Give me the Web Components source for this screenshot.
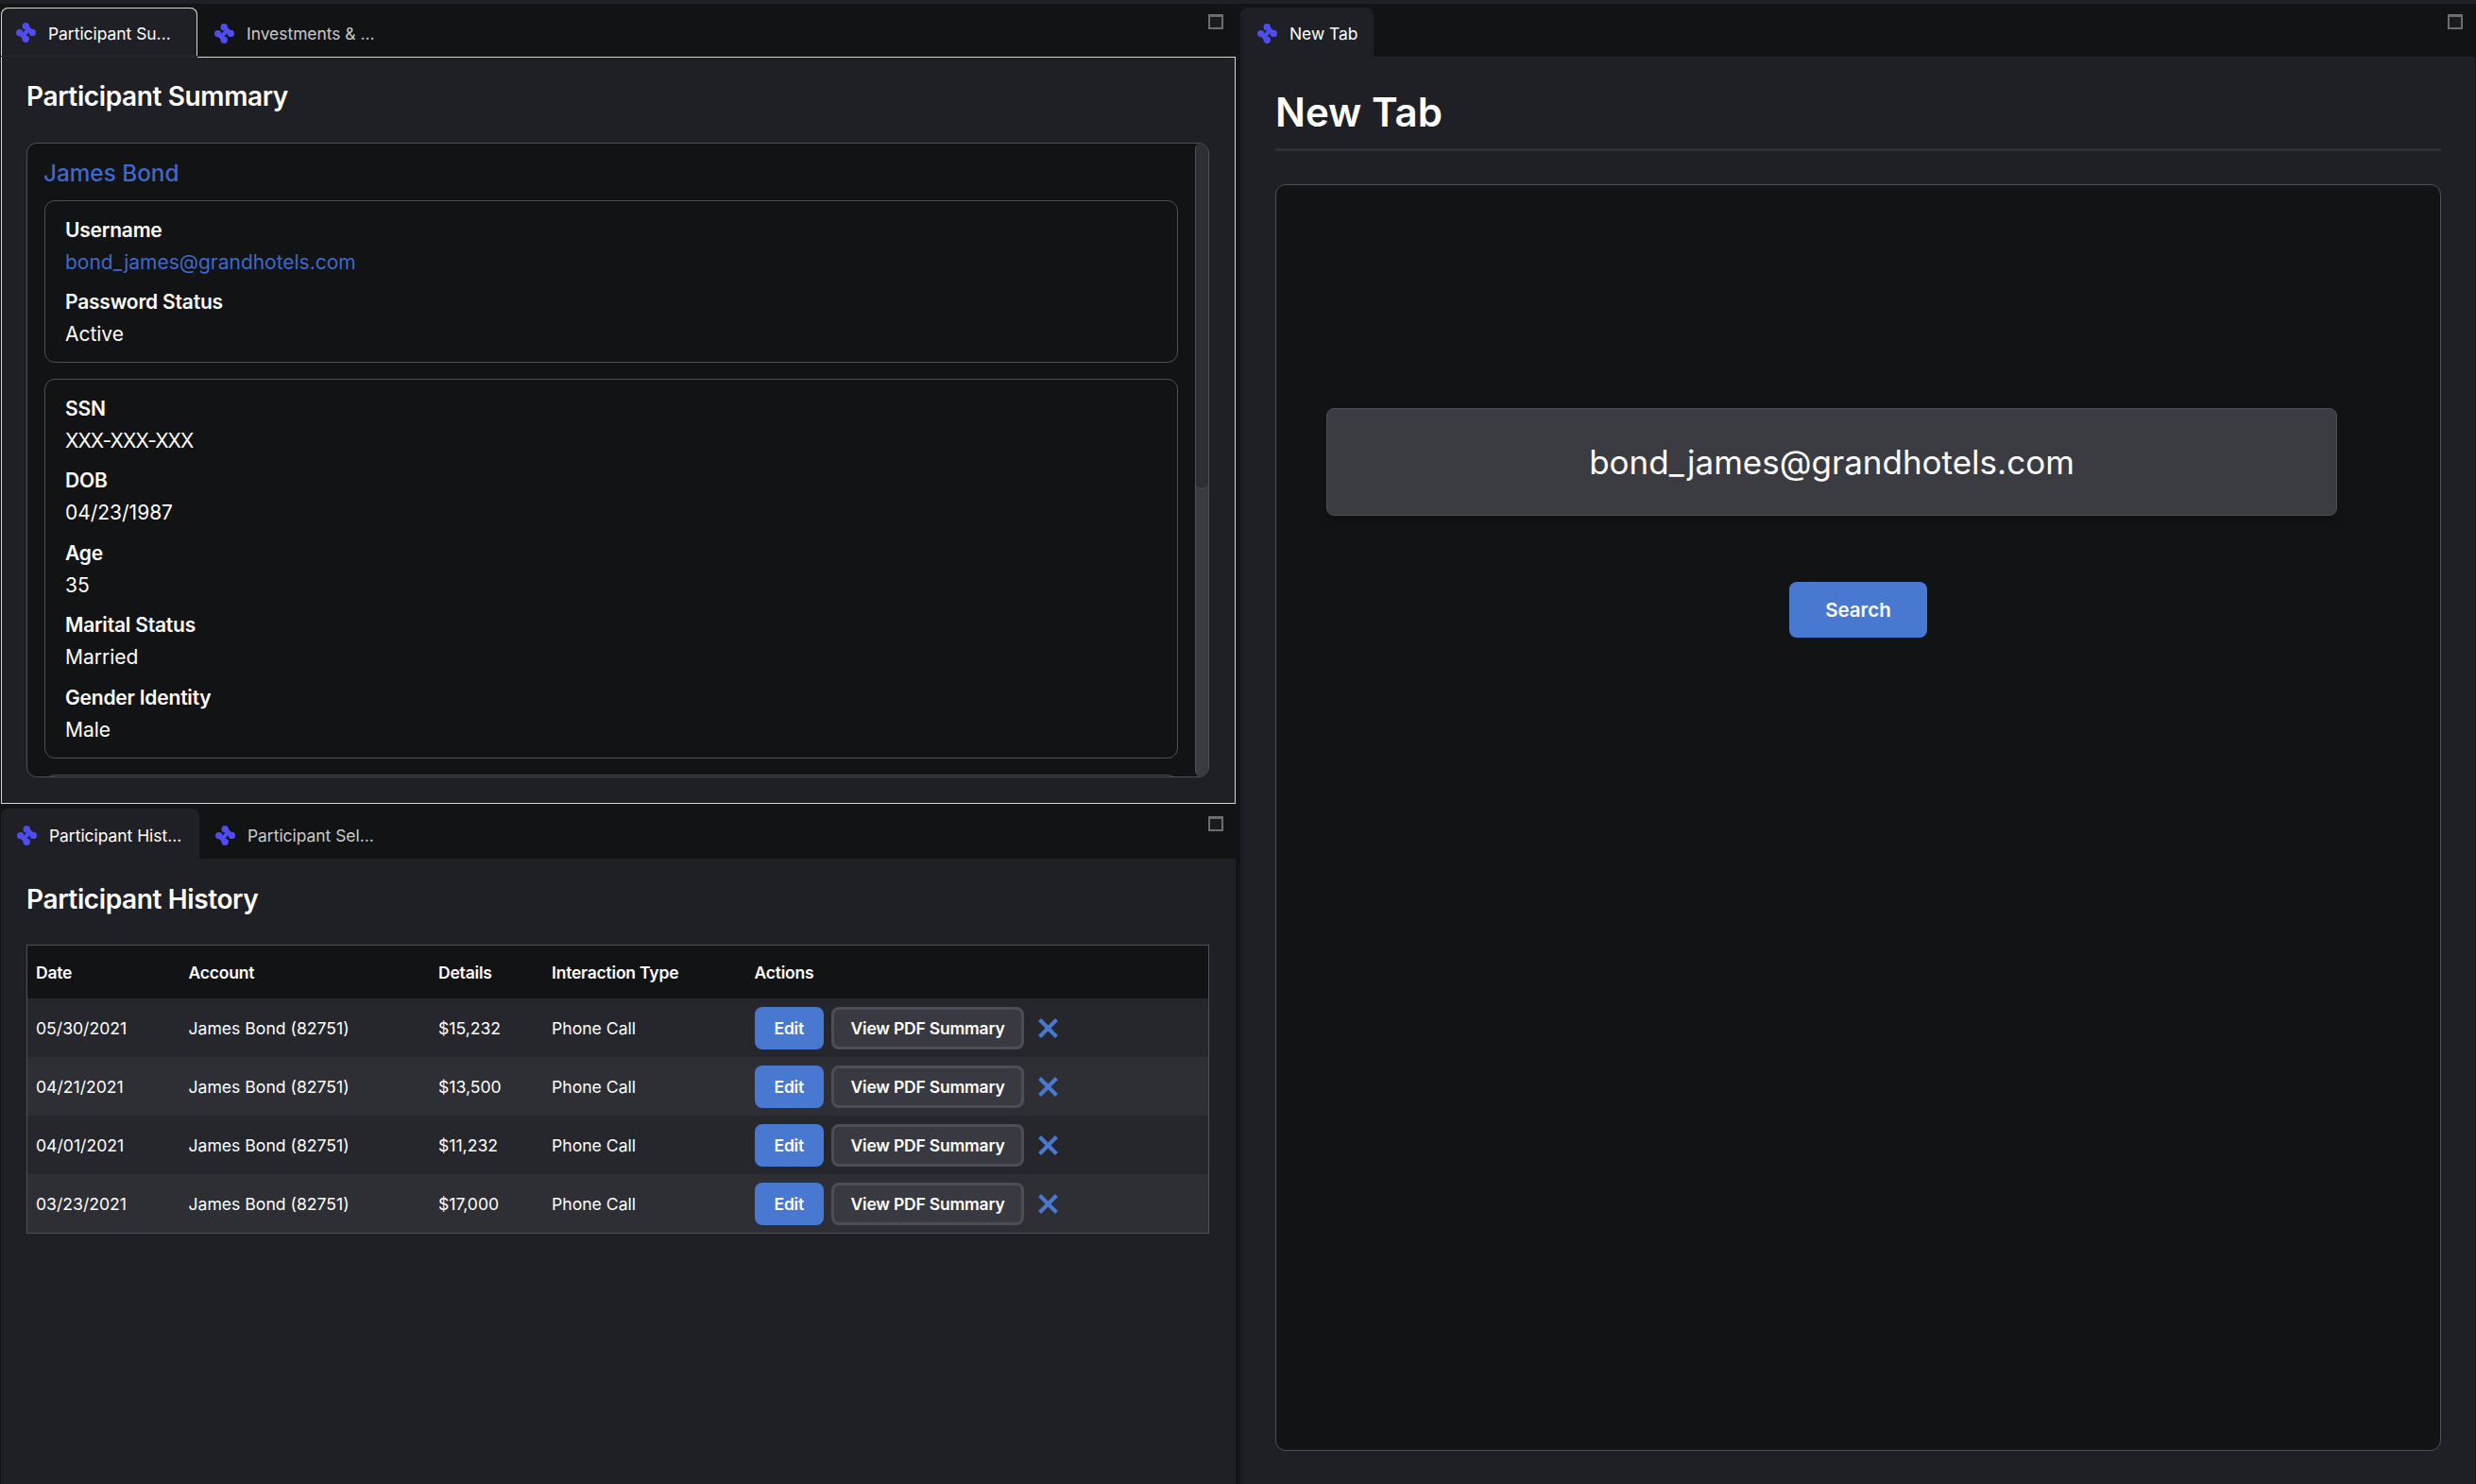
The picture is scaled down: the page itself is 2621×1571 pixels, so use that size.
<!DOCTYPE html>
<html><head><meta charset="utf-8"><style>
html,body{margin:0;padding:0;height:100%;background:#121315;overflow:hidden}
body{font-family:Inter,"Noto Sans",sans-serif;color:#fff}
</style></head><body>
<script>
const T=(html)=>{const t=document.createElement('template');t.innerHTML=html;return t};
function def(name,html){
  const tpl=T(html);
  customElements.define(name,class extends HTMLElement{
    constructor(){super();this.attachShadow({mode:'open'}).appendChild(tpl.content.cloneNode(true));}
  });
}
def('app-icon',`<style>:host{display:inline-flex;width:21px;height:21px;flex:none}svg{width:21px;height:21px}</style>
<svg viewBox="0 0 21 21" fill="#4f4df0"><circle cx="10.2" cy="3.7" r="3.7"/><circle cx="17.3" cy="10.4" r="3.7"/><circle cx="3.7" cy="10.6" r="3.7"/><circle cx="10.2" cy="17.3" r="3.7"/><path d="M10.2 3.7 17.3 10.4M3.7 10.6 10.2 17.3" stroke="#4f4df0" stroke-width="4.4"/><path d="M13.7 7 7 14" stroke="#4f4df0" stroke-width="4"/></svg>`);
def('app-shell',`<style>:host{display:flex;height:1571px;box-sizing:border-box;padding-top:4px;background:linear-gradient(#1f2025 4px,#121315 4px)}
.l{width:1307px;margin-left:1px;display:flex;flex-direction:column;flex:none}.r{flex:1;margin-left:5px;display:flex;padding-right:1px}</style>
<div class="l"><slot name="left"></slot></div><div class="r"><slot name="right"></slot></div>`);
def('dock-tab',`<style>:host{display:flex;align-items:center;box-sizing:border-box;height:var(--tabh,52px);margin-top:var(--tabm,4px);padding:var(--pt,3px) 0 0 18px;gap:13px;font-size:17.4px;color:#c9cacd;flex:none;white-space:nowrap}
:host([active]){background:#1f2025;border-radius:8px 8px 0 0;color:#fff;padding-left:16px}
:host([outlined]){box-shadow:inset 1px 0 #d4d4d6,inset -1px 0 #d4d4d6,inset 0 1px #d4d4d6;border-bottom:1px solid #2a2b30}
span{padding-top:var(--sp,0)}
</style><app-icon></app-icon><span><slot></slot></span>`);
def('dock-pane',`<style>:host{display:flex;flex-direction:column;position:relative;box-sizing:border-box;min-height:0}
.bar{height:56px;display:flex;flex:none;position:relative;box-sizing:border-box}
.max{position:absolute;width:16px;height:16px;box-sizing:border-box;border:2px solid #6d6d70;border-top-width:3px;background:#1a1b1e;top:11px;right:13px}
.body{flex:1;min-height:0;background:#1f2025;box-sizing:border-box;display:flex;flex-direction:column;overflow:hidden}
:host([focused]) .bar::after{content:"";position:absolute;left:var(--tabw);right:0;bottom:-1px;height:1px;background:#d4d4d6;z-index:1}
:host([focused]) .body{border:1px solid #d4d4d6;border-top:0}
</style><div class="bar"><slot name="tabs"></slot><span class="max"></span></div><div class="body"><slot></slot></div>`);
def('page-title',`<style>:host{display:block;font-size:28px;font-weight:600;line-height:34px;color:#fff;letter-spacing:-.38px}</style><slot></slot>`);
def('info-box',`<style>:host{display:block;box-sizing:border-box;border:1px solid #4f5056;border-radius:11px;padding:14px 21px 0;background:#121315;margin:0 0 17px 1px}</style><slot></slot>`);
def('info-row',`<style>:host{display:block;font-size:21px;line-height:34px;height:76.4px;color:#fff}
.k{font-weight:600;display:block;letter-spacing:-.2px}.v{display:block;color:var(--c,#fff);letter-spacing:var(--ls,-.02px)}</style><span class="k"><slot name="k"></slot></span><span class="v"><slot></slot></span>`);
def('summary-card',`<style>:host{display:block;flex:1;min-height:0;margin:0 27px 27px 26px;position:relative;box-sizing:border-box;border:1px solid #4f5056;border-radius:11px;background:#121315;overflow:hidden}
.in{padding:14px 32px 0 17px;height:700px}
h3{margin:0 0 12px;font-size:24.3px;font-weight:500;line-height:34px;color:#3f68cc}
.track{position:absolute;top:-1px;right:-1px;bottom:-1px;width:15px;border-radius:8px;background:#3a3b41;box-sizing:border-box;border:solid #515257;border-width:0 1px;overflow:hidden}
.thumb{position:absolute;top:0;left:0;right:0;height:367px;background:#2e2f34;border-radius:0 0 8px 8px;border-bottom:1px solid #515257;box-sizing:border-box}
</style><div class="in"><h3>James Bond</h3><slot></slot></div><div class="track"><div class="thumb"></div></div>`);
def('ui-btn',`<style>:host{display:inline-flex;align-items:center;justify-content:center;box-sizing:border-box;height:45px;border-radius:8px;font-size:17.5px;font-weight:600;background:#4878d0;color:#fff;padding:0 21px;white-space:nowrap;letter-spacing:-.2px}
:host([kind=sec]){background:#393a41;border:3px solid #4d4e56;padding:0 17.5px}
:host([kind=big]){height:59px;font-size:20.5px;padding:0 38.5px;letter-spacing:0}</style><slot></slot>`);
def('x-icon',`<style>:host{display:inline-flex;flex:none;width:21px;height:21px;margin-left:7px}svg{width:21px;height:21px}</style>
<svg viewBox="0 0 21 21"><path d="M1.6 1.6 19.4 19.4M19.4 1.6 1.6 19.4" stroke="#4878d0" stroke-width="4.2"/></svg>`);
def('action-cell',`<style>:host{display:flex;align-items:center;gap:8px}</style><ui-btn>Edit</ui-btn><ui-btn kind="sec">View PDF Summary</ui-btn><x-icon></x-icon>`);
def('history-row',`<style>:host{display:grid;grid-template-columns:161.5px 264.5px 120px 214.5px 1fr;align-items:center;height:62px;box-sizing:border-box;padding-left:9px;font-size:17.6px;background:#26272c;color:#fff}
:host(:nth-of-type(even)){background:#2e2f34}
</style><span><slot name="d"></slot></span><span><slot name="a"></slot></span><span><slot name="m"></slot></span><span><slot name="t"></slot></span><action-cell></action-cell>`);
def('history-head',`<style>:host{display:grid;grid-template-columns:161.5px 264.5px 120px 214.5px 1fr;align-items:center;height:56px;box-sizing:border-box;padding-left:9px;font-size:17.5px;font-weight:600;background:#121315;color:#fff;letter-spacing:-.2px}</style>
<span>Date</span><span>Account</span><span>Details</span><span>Interaction Type</span><span>Actions</span>`);
def('history-table',`<style>:host{display:block;margin:31px 28px 0 27px;border:1px solid #4f5056}</style><slot></slot>`);
def('search-panel',`<style>:host{display:flex;flex:1;flex-direction:column;align-items:center;margin:35px 36px 35px 37px;box-sizing:border-box;border:1px solid #4f5056;border-radius:11px;background:#121315;padding-top:236px}
.inp{align-self:flex-start;margin-left:53px;width:1070px;height:114px;box-sizing:border-box;border:1px solid #4d4e56;border-radius:8px;background:#3b3c42;display:flex;align-items:center;justify-content:center;font-size:35px;box-shadow:0 6px 8px rgba(0,0,0,.18);color:#fff}
ui-btn{margin-top:70px}</style><div class="inp">bond_james@grandhotels.com</div><ui-btn kind="big">Search</ui-btn>`);
def('new-tab-head',`<style>:host{display:block;margin:32px 36px 0 37px;padding-bottom:12px;border-bottom:3px solid #2f3035;font-size:42px;font-weight:600;line-height:53px;color:#fff}</style><slot></slot>`);
</script>
<app-shell>
 <dock-pane slot="left" focused style="height:847px;--tabw:208px">
  <dock-tab slot="tabs" active outlined style="width:208px;--pt:1px;--sp:2px">Participant Su...</dock-tab>
  <dock-tab slot="tabs">Investments &amp; ...</dock-tab>
  <page-title style="margin:25px 0 0 26px">Participant Summary</page-title>
  <summary-card style="margin-top:32px">
   <info-box style="height:172px">
    <info-row style="--c:#3f68cc"><span slot="k">Username</span>bond_james@grandhotels.com</info-row>
    <info-row><span slot="k">Password Status</span>Active</info-row>
   </info-box>
   <info-box style="height:402px">
    <info-row style="--ls:-.9px"><span slot="k">SSN</span>XXX-XXX-XXX</info-row>
    <info-row><span slot="k">DOB</span>04/23/1987</info-row>
    <info-row><span slot="k">Age</span>35</info-row>
    <info-row><span slot="k">Marital Status</span>Married</info-row>
    <info-row><span slot="k">Gender Identity</span>Male</info-row>
   </info-box>
   <info-box style="height:60px"></info-box>
  </summary-card>
 </dock-pane>
 <dock-pane slot="left" style="flex:1;margin-top:2px;--tabh:53px;--tabm:3px;--pt:4px">
  <dock-tab slot="tabs" active style="width:210px;padding-left:17px">Participant Hist...</dock-tab>
  <dock-tab slot="tabs" style="padding-left:17px">Participant Sel...</dock-tab>
  <page-title style="margin:26px 0 0 27px">Participant History</page-title>
  <history-table>
   <history-head></history-head>
   <history-row><span slot="d">05/30/2021</span><span slot="a">James Bond (82751)</span><span slot="m">$15,232</span><span slot="t">Phone Call</span></history-row>
   <history-row><span slot="d">04/21/2021</span><span slot="a">James Bond (82751)</span><span slot="m">$13,500</span><span slot="t">Phone Call</span></history-row>
   <history-row><span slot="d">04/01/2021</span><span slot="a">James Bond (82751)</span><span slot="m">$11,232</span><span slot="t">Phone Call</span></history-row>
   <history-row><span slot="d">03/23/2021</span><span slot="a">James Bond (82751)</span><span slot="m">$17,000</span><span slot="t">Phone Call</span></history-row>
  </history-table>
 </dock-pane>
 <dock-pane slot="right" style="flex:1">
  <dock-tab slot="tabs" active style="width:141px;padding-left:18px">New Tab</dock-tab>
  <new-tab-head>New Tab</new-tab-head>
  <search-panel></search-panel>
 </dock-pane>
</app-shell>
</body></html>
